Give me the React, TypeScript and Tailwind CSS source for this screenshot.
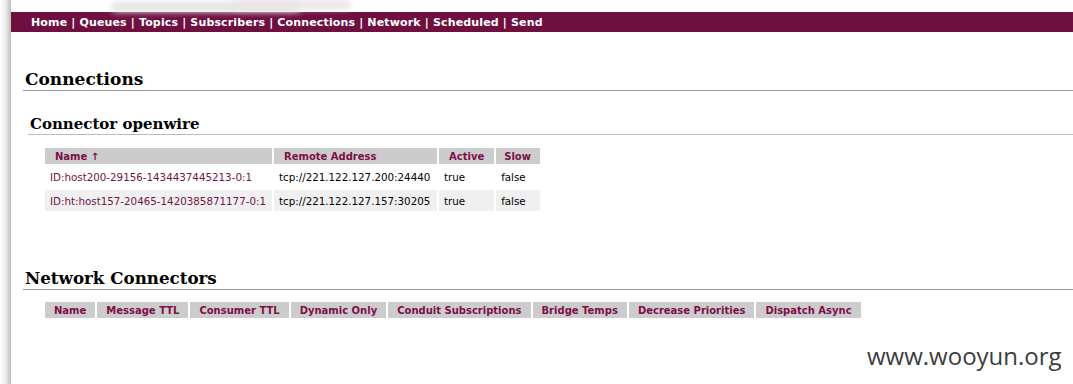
import React from "react";

const navItems = ["Home", "Queues", "Topics", "Subscribers", "Connections", "Network", "Scheduled", "Send"];

const connections = [
	{ id: "ID:host200-29156-1434437445213-0:1", remote: "tcp://221.122.127.200:24440", active: "true", slow: "false" },
	{ id: "ID:ht:host157-20465-1420385871177-0:1", remote: "tcp://221.122.127.157:30205", active: "true", slow: "false" },
];

const networkCols = [
	"Name",
	"Message TTL",
	"Consumer TTL",
	"Dynamic Only",
	"Conduit Subscriptions",
	"Bridge Temps",
	"Decrease Priorities",
	"Dispatch Async",
];

const App: React.FC = () => {
	return (
		<div className="relative flex min-h-[384px] bg-white font-['DejaVu_Sans',Verdana,sans-serif] text-[11px] text-black overflow-hidden">
			{/* left page edge */}
			<div className="w-[11px] shrink-0 bg-gradient-to-r from-white via-[#ececec] to-[#bdbdbd]" />

			<div className="flex-1 min-w-0">
				{/* faint logo remains above the nav */}
				<div className="relative h-[12px]">
					<div className="absolute left-[100px] top-[2px] h-[10px] w-[190px] rounded-full bg-[#e4e4e4] blur-[3px]" />
					<div className="absolute left-[220px] top-[0px] h-[9px] w-[120px] rounded-full bg-[#ebe4e6] blur-[3px]" />
				</div>

				{/* nav bar */}
				<div className="flex h-[20px] items-center bg-[#6f0f3f] pl-[20px] pt-[2px] font-bold text-white text-[11px] tracking-[0.15px]">
					{navItems.map((item, i) => (
						<span key={item} className="whitespace-pre">
							{item}
							{i < navItems.length - 1 ? " | " : ""}
						</span>
					))}
				</div>

				{/* Connections */}
				<h2 className="ml-[12px] mt-[36px] h-[23px] border-b border-[#999] pl-[2px] font-['DejaVu_Serif',Georgia,serif] text-[17px] font-bold leading-[22px]">
					Connections
				</h2>

				<h3 className="ml-[17px] mt-[23px] h-[21px] border-b border-[#bbb] pl-[2px] font-['DejaVu_Serif',Georgia,serif] text-[15px] font-bold leading-[20px]">
					Connector openwire
				</h3>

				<table className="ml-[32px] mt-[11px] border-separate border-spacing-[2px] text-[10.3px]">
					<thead>
						<tr className="h-[16px]">
							<th className="w-[227px] bg-[#cccccc] px-[10px] pt-[1px] text-left font-bold text-[#7b1048] text-[10px]">Name ↑</th>
							<th className="w-[163px] bg-[#cccccc] px-[10px] pt-[1px] text-left font-bold text-[#7b1048] text-[10px]">Remote Address</th>
							<th className="w-[53px] bg-[#cccccc] px-[10px] pt-[1px] text-left font-bold text-[#7b1048] text-[10px]">Active</th>
							<th className="w-[44px] bg-[#cccccc] px-[8px] pt-[1px] text-left font-bold text-[#7b1048] text-[10px]">Slow</th>
						</tr>
					</thead>
					<tbody>
						{connections.map((c, i) => (
							<tr key={c.id} className={i % 2 === 1 ? "h-[21px] bg-[#f0f0f0]" : "h-[22px]"}>
								<td className="px-[5px] pt-[2px] text-[#741347] whitespace-nowrap">{c.id}</td>
								<td className="px-[5px] pt-[2px] whitespace-nowrap">{c.remote}</td>
								<td className="px-[5px] pt-[2px]">{c.active}</td>
								<td className="px-[5px] pt-[2px]">{c.slow}</td>
							</tr>
						))}
					</tbody>
				</table>

				{/* Network Connectors */}
				<h2 className="ml-[12px] mt-[54px] h-[23px] border-b border-[#999] pl-[2px] font-['DejaVu_Serif',Georgia,serif] text-[16.7px] font-bold leading-[22px]">
					Network Connectors
				</h2>

				<table className="ml-[32px] mt-[10px] border-separate border-spacing-[2px] text-[10px]">
					<thead>
						<tr className="h-[16px]">
							{networkCols.map((col) => (
								<th key={col} className="bg-[#cccccc] px-[9px] pt-[1px] text-left font-bold text-[#7b1048] whitespace-nowrap">
									{col}
								</th>
							))}
						</tr>
					</thead>
				</table>
			</div>

			{/* watermark */}
			<div className="absolute left-[867px] top-[338px] font-['Open_Sans',sans-serif] text-[24px] text-[#3d3d3d]">
				www.wooyun.org
			</div>
		</div>
	);
};

export default App;
